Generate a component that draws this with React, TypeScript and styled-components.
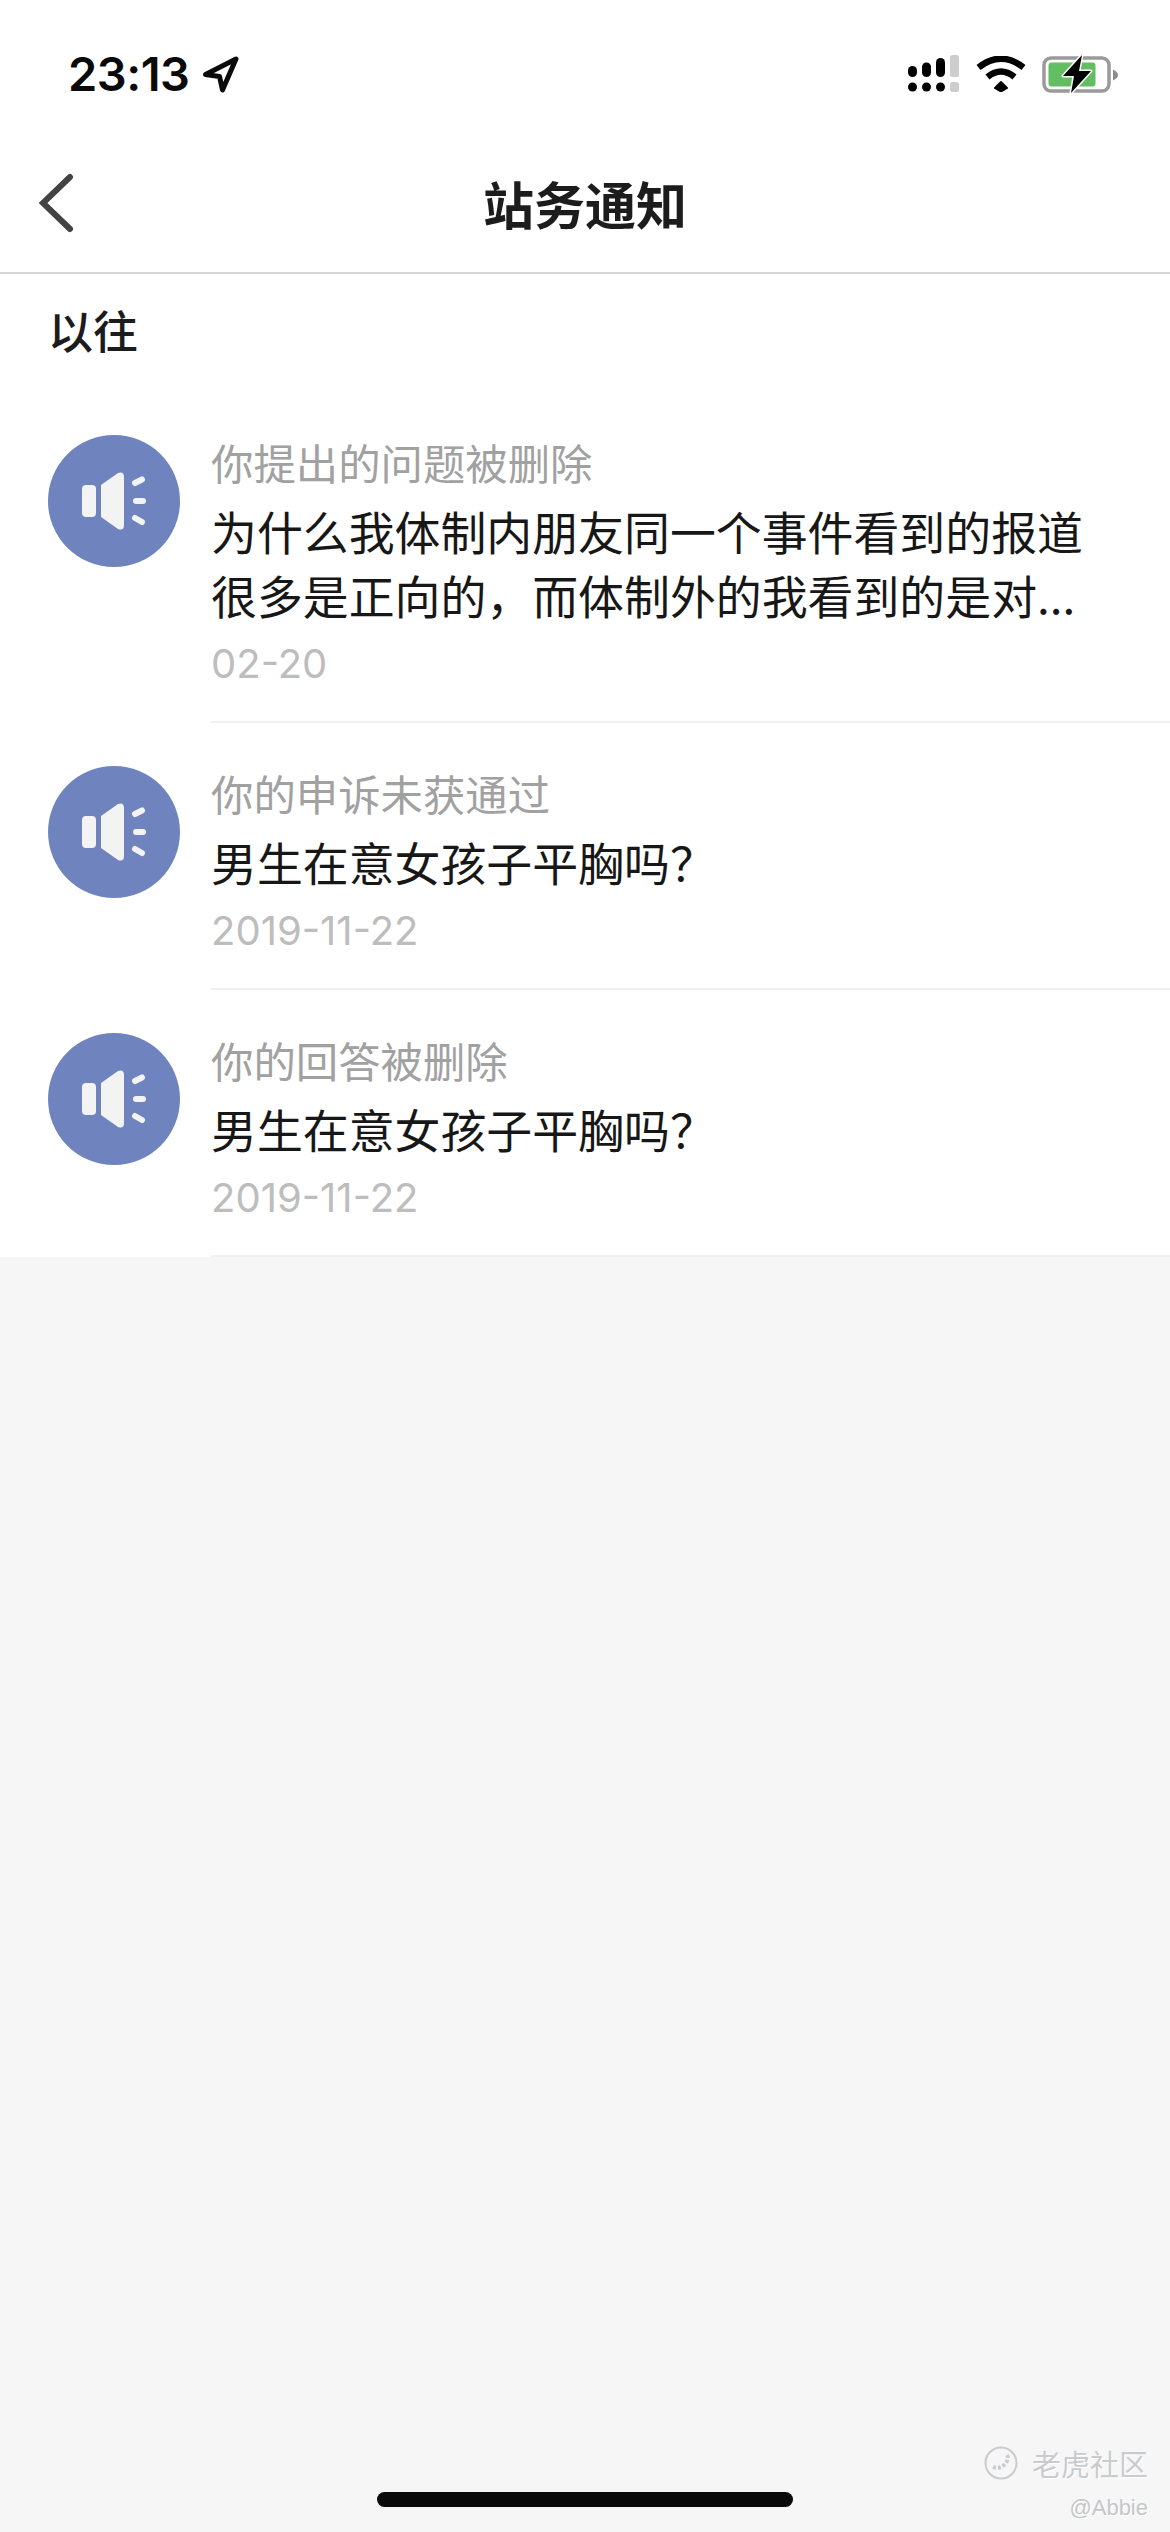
import React from 'react';
import styled, { createGlobalStyle } from 'styled-components';

const GlobalStyle = createGlobalStyle`
  html, body {
    margin: 0;
    padding: 0;
    background: #f6f6f6;
  }
  * {
    box-sizing: border-box;
  }
`;

const sans = `"Inter", "Noto Sans CJK SC", "Liberation Sans", sans-serif`;
const cjk = `"Noto Sans CJK SC", "Noto Sans", sans-serif`;

const Page = styled.div`
  position: relative;
  width: 1170px;
  height: 2532px;
  display: flex;
  flex-direction: column;
  background: #f6f6f6;
  overflow: hidden;
`;

const StatusBar = styled.div`
  height: 140px;
  background: #fff;
  padding: 46px 52px 0 68px;
  display: flex;
  justify-content: space-between;
  align-items: flex-start;
`;

const Clock = styled.div`
  display: flex;
  align-items: center;
  gap: 13px;
  font-family: ${sans};
  font-size: 47px;
  line-height: 56px;
  font-weight: 600;
  letter-spacing: -0.5px;
  color: #0a0a0a;
`;

const StatusIcons = styled.div`
  display: flex;
  align-items: center;
  gap: 16px;
  height: 56px;
`;

const NavBar = styled.header`
  position: relative;
  height: 134px;
  background: #fff;
  border-bottom: 2px solid #d6d6d6;
  display: flex;
  align-items: center;
  justify-content: center;
  padding-bottom: 6px;
`;

const BackButton = styled.div`
  position: absolute;
  left: 38px;
  top: 33px;
  width: 38px;
  height: 60px;
  display: flex;
`;

const NavTitle = styled.h1`
  margin: 0;
  font-family: ${cjk};
  font-size: 51px;
  line-height: 60px;
  font-weight: 700;
  color: #1c1c1c;
`;

const ListPanel = styled.section`
  background: #fff;
`;

const SectionTitle = styled.h2`
  margin: 0;
  padding: 26px 0 32px 48px;
  font-family: ${cjk};
  font-size: 45px;
  line-height: 60px;
  font-weight: 500;
  color: #1c1c1c;
`;

const Row = styled.article`
  display: flex;
  gap: 31px;
  padding: 40px 0 0 48px;
`;

const Avatar = styled.div`
  flex: none;
  width: 132px;
  height: 132px;
  margin-top: 3px;
  border-radius: 50%;
  background: #6f84bf;
  display: flex;
  align-items: center;
  justify-content: center;
`;

const RowBody = styled.div`
  flex: 1;
  padding-bottom: 33px;
  border-bottom: 2px solid #f0f0f0;
`;

const Notice = styled.div`
  font-family: ${cjk};
  font-size: 42.4px;
  line-height: 60px;
  color: #a1a1a1;
`;

const Subject = styled.p`
  margin: 6px 20px 0 0;
  font-family: ${cjk};
  font-size: 45.9px;
  line-height: 64px;
  color: #171717;
`;

const Stamp = styled.time`
  display: block;
  margin-top: 14px;
  font-family: ${sans};
  font-size: 40px;
  line-height: 48px;
  color: #bdbdbd;
`;

const HomeIndicator = styled.div`
  margin: auto auto 25px;
  width: 416px;
  height: 15px;
  border-radius: 8px;
  background: #0a0a0a;
`;

const Watermark = styled.div`
  position: absolute;
  right: 22px;
  bottom: 12px;
  display: flex;
  flex-direction: column;
  align-items: flex-end;
  gap: 16px;
`;

const WatermarkBrand = styled.div`
  display: flex;
  align-items: center;
  gap: 14px;
  font-family: ${cjk};
  font-size: 29px;
  line-height: 34px;
  color: #c9cbce;
  text-shadow: 1px 1px 0 #fff;
`;

const WatermarkUser = styled.div`
  font-family: "Liberation Sans", sans-serif;
  font-size: 22px;
  line-height: 24px;
  color: #c4c6c9;
  text-shadow: 1px 1px 0 #fff;
`;

const SpeakerIcon = () => (
  <svg width="64" height="58" viewBox="0 0 64 58" fill="#f3f3f3">
    <rect x="0" y="13" width="14" height="32" rx="4" />
    <path d="M19 13 L36 1 Q42 -1 42 5 V53 Q42 59 36 57 L19 45 Z" />
    <g stroke="#f3f3f3" strokeWidth="6" strokeLinecap="round">
      <path d="M53 11 L60 7.5" />
      <path d="M54 29 H61" />
      <path d="M53 46 L60 50" />
    </g>
  </svg>
);

const LocationIcon = () => (
  <svg width="37" height="37" viewBox="0 0 37 37" fill="none" stroke="#0a0a0a" strokeWidth="5" strokeLinejoin="round">
    <path d="M3.5 18.5 L34 3 L20.5 34 L17.5 20.5 Z" />
  </svg>
);

const SignalIcon = () => (
  <svg width="52" height="38" viewBox="0 0 52 38" fill="#000">
    <rect x="0" y="11" width="9" height="11" rx="4.5" />
    <rect x="14" y="7.5" width="9" height="14.5" rx="4.5" />
    <rect x="28" y="3" width="9" height="19" rx="4.5" />
    <rect x="42" y="0" width="9" height="22" rx="2.5" fill="#cdcdcd" />
    <circle cx="4.5" cy="32" r="4.5" />
    <circle cx="18.5" cy="32" r="4.5" />
    <circle cx="32.5" cy="32" r="4.5" />
    <rect x="42" y="27" width="9" height="10" rx="2.5" fill="#cdcdcd" />
  </svg>
);

const WifiIcon = () => (
  <svg width="50" height="36" viewBox="0 0 50 36" fill="none" stroke="#000" strokeWidth="6.5">
    <path d="M2.5 11.5 Q25 -6 47.5 11.5" />
    <path d="M11.5 21 Q25 10 38.5 21" />
    <path d="M19 32 L25 35.5 L31 32 L25 26 Z" fill="#000" strokeWidth="2" strokeLinejoin="round" />
  </svg>
);

const BatteryIcon = () => (
  <svg width="76" height="40" viewBox="0 0 76 40" fill="none">
    <rect x="2" y="4" width="65" height="33" rx="7" stroke="#9a9a9a" strokeWidth="3.5" />
    <rect x="6.5" y="8.5" width="47" height="24" rx="3" fill="#62bd63" />
    <path d="M71 15.5 Q76 18 76 21 Q76 24 71 26.5 Z" fill="#8c8c8c" />
    <path d="M40 1 L21 22 H32 L29 39 L49 17 H37 Z" fill="#000" stroke="#fff" strokeWidth="3" strokeLinejoin="round" paintOrder="stroke" />
  </svg>
);

const BackIcon = () => (
  <svg width="38" height="60" viewBox="0 0 38 60" fill="none" stroke="#434343" strokeWidth="6" strokeLinecap="round">
    <path d="M32 4 L5 30 L32 56" />
  </svg>
);

const WatermarkLogo = () => (
  <svg width="34" height="34" viewBox="0 0 34 34" fill="none" stroke="#c9cbce" strokeWidth="2">
    <circle cx="17" cy="17" r="15.5" />
    <path d="M9 21 Q16 24 22 17 Q25 12 23 9" strokeWidth="4" strokeDasharray="3 2" />
  </svg>
);

type Item = {
  notice: string;
  subject: React.ReactNode;
  stamp: string;
};

const items: Item[] = [
  {
    notice: '你提出的问题被删除',
    subject: (
      <>
        为什么我体制内朋友同一个事件看到的报道
        <br />
        很多是正向的，而体制外的我看到的是对...
      </>
    ),
    stamp: '02-20',
  },
  { notice: '你的申诉未获通过', subject: '男生在意女孩子平胸吗？', stamp: '2019-11-22' },
  { notice: '你的回答被删除', subject: '男生在意女孩子平胸吗？', stamp: '2019-11-22' },
];

const App: React.FC = () => {
  return (
    <Page>
      <GlobalStyle />
      <StatusBar>
        <Clock>
          23:13
          <LocationIcon />
        </Clock>
        <StatusIcons>
          <SignalIcon />
          <WifiIcon />
          <BatteryIcon />
        </StatusIcons>
      </StatusBar>
      <NavBar>
        <BackButton>
          <BackIcon />
        </BackButton>
        <NavTitle>站务通知</NavTitle>
      </NavBar>
      <ListPanel>
        <SectionTitle>以往</SectionTitle>
        {items.map((item, i) => (
          <Row key={i}>
            <Avatar>
              <SpeakerIcon />
            </Avatar>
            <RowBody>
              <Notice>{item.notice}</Notice>
              <Subject>{item.subject}</Subject>
              <Stamp>{item.stamp}</Stamp>
            </RowBody>
          </Row>
        ))}
      </ListPanel>
      <HomeIndicator />
      <Watermark>
        <WatermarkBrand>
          <WatermarkLogo />
          老虎社区
        </WatermarkBrand>
        <WatermarkUser>@Abbie</WatermarkUser>
      </Watermark>
    </Page>
  );
};

export default App;
